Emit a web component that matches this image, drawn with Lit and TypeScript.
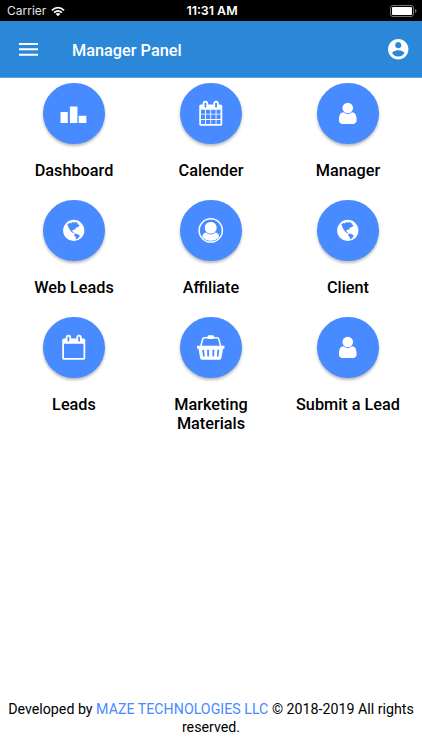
import { LitElement, html, css, svg } from "lit";
import { customElement } from "lit/decorators.js";

const calendarFrame =
  "M1728 384v1280q0 52-38 90t-90 38h-1408q-52 0-90-38t-38-90v-1280q0-52 38-90t90-38h128v-96q0-66 47-113t113-47h64q66 0 113 47t47 113v96h384v-96q0-66 47-113t113-47h64q66 0 113 47t47 113v96h128q52 0 90 38t38 90z";
const rings =
  "M576 448v-288q0-13-9.500-22.500t-22.500-9.500h-64q-13 0-22.500 9.500t-9.500 22.500v288q0 13 9.500 22.500t22.500 9.500h64q13 0 22.500-9.500t9.500-22.500zM1344 448v-288q0-13-9.500-22.500t-22.500-9.500h-64q-13 0-22.500 9.500t-9.500 22.500v288q0 13 9.500 22.500t22.500 9.500h64q13 0 22.500-9.500t9.500-22.500z";
const cells =
  "M192 1664h288v-288h-288zM544 1664h320v-288h-320zM928 1664h320v-288h-320zM1312 1664h288v-288h-288zM192 1312h288v-320h-288zM544 1312h320v-320h-320zM928 1312h320v-320h-320zM1312 1312h288v-320h-288zM192 928h288v-288h-288zM544 928h320v-288h-320zM928 928h320v-288h-320zM1312 928h288v-288h-288z";
const personPath =
  "M1536 1399q0 109-62.500 187t-150.500 78h-854q-88 0-150.500-78t-62.500-187q0-85 8.500-160.500t31.500-152 58.500-131 94-89 134.500-34.500q131 128 313 128t313-128q76 0 134.500 34.500t94 89 58.500 131 31.500 152 8.500 160.500zM1280 512q0 159-112.500 271.500t-271.500 112.500-271.500-112.500-112.500-271.500 112.500-271.500 271.500-112.500 271.500 112.500 112.500 271.500z";
const unit = "translate(18.500 18) scale(.01395)";

const icons = {
  bars: svg`<path d="M17.700 29.300H25V40.200H17.700zM27.100 23.700h7.600v16.500h-7.600zM36 33h7.700v7.200H36z"/>`,
  calendar: svg`<g transform=${unit}><path fill-rule="evenodd" d=${calendarFrame + rings + cells}/></g>`,
  blank: svg`<g transform=${unit}><path fill-rule="evenodd" d=${calendarFrame + rings + "M192 1664h1408v-1024h-1408z"}/></g>`,
  person: svg`<g transform=${unit}><path d=${personPath}/></g>`,
  globe: svg`<circle cx="31" cy="30.700" r="10.700"/>
    <path class="land" d="M24.400 24.600l2.400-1.400 1.700.2 1-1.100 1.700.6 1.200-.8 2.300.9.500 1.400 1.700 1.300-1.100 1.200-1.700.5-1.500 1.700-1.300 1.100-.8-.3-1.100.9.500 1.200 1.200.7 1.200 1-1.900-.4-2-1.200-1.200-2-1.300-1.800-.5-1.800zM31.600 34.300l1.700-.5 2 .9 1.800 1.100-.8 1.700-2 1.900-1.200.2.100-2.100-1.500-1.300z"/>`,
  account: svg`<circle class="ring" cx="31" cy="30.700" r="11.700"/>
    <path d="M31 22.200c3.500 0 6 2.400 6 5.700 0 3.400-2.600 5.900-6 5.900s-6-2.500-6-5.900c0-3.300 2.500-5.700 6-5.700zM26.200 32.800q2.100 2 4.800 2t4.800-2c2.300.3 3.300 1.900 3.700 4.200A10.400 10.400 0 0 1 31 41a10.400 10.400 0 0 1-8.500-4c.4-2.300 1.400-3.900 3.700-4.200z"/>`,
  basket: svg`<path class="handle" d="M20.800 30.200l1.900-7.500q.4-1.700 2.200-1.700h12.200q1.800 0 2.200 1.700l1.900 7.500"/>
    <rect x="27.700" y="18.400" width="6.600" height="3.800" rx="1.300"/>
    <path fill-rule="evenodd" d="M18 28.900h26q1 0 1 1.500t-1 1.500h-.6l-1.700 9.500q-.3 1.700-1.800 1.700H22.100q-1.500 0-1.800-1.700l-1.700-9.500H18q-1 0-1-1.500t1-1.500zM22.400 33l.8 6.800h1.700L24.300 33zM27.300 33l.3 6.800h1.700V33zM32.700 33v6.800h1.700l.3-6.800zM37.700 33l-.6 6.800h1.700l.8-6.800z"/>`,
};

const entries: [keyof typeof icons, string][] = [
  ["bars", "Dashboard"],
  ["calendar", "Calender"],
  ["person", "Manager"],
  ["globe", "Web Leads"],
  ["account", "Affiliate"],
  ["globe", "Client"],
  ["blank", "Leads"],
  ["basket", "Marketing Materials"],
  ["person", "Submit a Lead"],
];

@customElement("app-root")
export class AppRoot extends LitElement {
  static styles = css`
    :host { display: flex; flex-direction: column; height: 750px; background: #fff; font-family: Roboto, sans-serif; color: #000; overflow: hidden; }
    svg { display: block; }
    .status { display: grid; grid-template-columns: 1fr auto 1fr; align-items: center; height: 21px; box-sizing: border-box; padding: 1px 5px 0 7px; background: #000; color: #fff; font: 12px/20px Inter, sans-serif; }
    .carrier { display: flex; align-items: center; gap: 5px; color: #e4e4e4; }
    .time { font-weight: 600; font-size: 12.400px; }
    .battery { justify-self: end; }
    .bar { display: flex; align-items: center; height: 57px; box-sizing: border-box; padding: 0 12px 0 19px; background: #2b88d9; border-bottom: 1px solid #5ba6e8; color: #fff; }
    .title { flex: 1; margin: 3px 0 0 34px; font-size: 16.300px; font-weight: 500; line-height: 20px; }
    .grid { display: grid; grid-template-columns: repeat(3, 137px); grid-auto-rows: 117px; justify-content: center; padding-top: 4.500px; flex: 1; }
    .item { display: flex; flex-direction: column; align-items: center; }
    .disc { width: 61.500px; height: 61.500px; border-radius: 50%; background: #488aff; box-shadow: 0 2px 3px rgba(0,0,0,.28); }
    .disc svg { width: 100%; height: 100%; fill: #fff; }
    .disc svg .land { fill: #488aff; }
    .disc svg .ring { fill: none; stroke: #fff; stroke-width: 1.500; }
    .disc svg .handle { fill: none; stroke: #fff; stroke-width: 1.500; }
    .label { margin-top: 16.500px; width: 116px; text-align: center; font-size: 16.250px; font-weight: 500; line-height: 19.500px; }
    .footer { text-align: center; font-size: 14.220px; line-height: 17.500px; padding: 0 4px 14px; }
    .link { color: #488aff; }
  `;

  render() {
    return html`
      <div class="status">
        <div class="carrier"><span>Carrier</span>
          <svg width="14" height="11" viewBox="0 0 15 11" fill="none" stroke="#fff" stroke-width="1.900"><path d="M1 4.300Q7.500-1.600 14 4.300M3.300 6.700Q7.500 2.900 11.700 6.700"/><path fill="#fff" stroke="none" d="M5 8.200Q7.500 6.200 10 8.200L7.500 10.700z"/></svg>
        </div>
        <span class="time">11:31 AM</span>
        <svg class="battery" width="27" height="12" viewBox="0 0 27 12"><rect x=".500" y=".500" width="23" height="11" rx="2.500" fill="none" stroke="#777"/><rect x="2" y="2" width="20" height="8" rx="1" fill="#fff"/><path d="M25 4q1.500.500 1.500 2T25 8z" fill="#777"/></svg>
      </div>
      <div class="bar">
        <svg width="19" height="13" viewBox="0 0 19 13" fill="#fff"><path d="M0 0h19v2H0zM0 5.300h19v2H0zM0 10.700h19v2H0z"/></svg>
        <span class="title">Manager Panel</span>
        <svg width="24.500" height="24.500" viewBox="0 0 24 24" fill="#fff"><path d="M12 2C6.480 2 2 6.480 2 12s4.480 10 10 10 10-4.480 10-10S17.520 2 12 2zm0 3c1.660 0 3 1.340 3 3s-1.340 3-3 3-3-1.340-3-3 1.340-3 3-3zm0 14.200c-2.500 0-4.710-1.280-6-3.220.030-1.990 4-3.080 6-3.080 1.990 0 5.970 1.090 6 3.080-1.290 1.940-3.500 3.220-6 3.220z"/></svg>
      </div>
      <div class="grid">
        ${entries.map(([icon, label]) => html`<div class="item">
          <div class="disc"><svg viewBox="0 0 62 62">${icons[icon]}</svg></div>
          <div class="label">${label}</div>
        </div>`)}
      </div>
      <div class="footer">Developed by <span class="link">MAZE TECHNOLOGIES LLC</span> © 2018-2019 All rights reserved.</div>
    `;
  }
}
